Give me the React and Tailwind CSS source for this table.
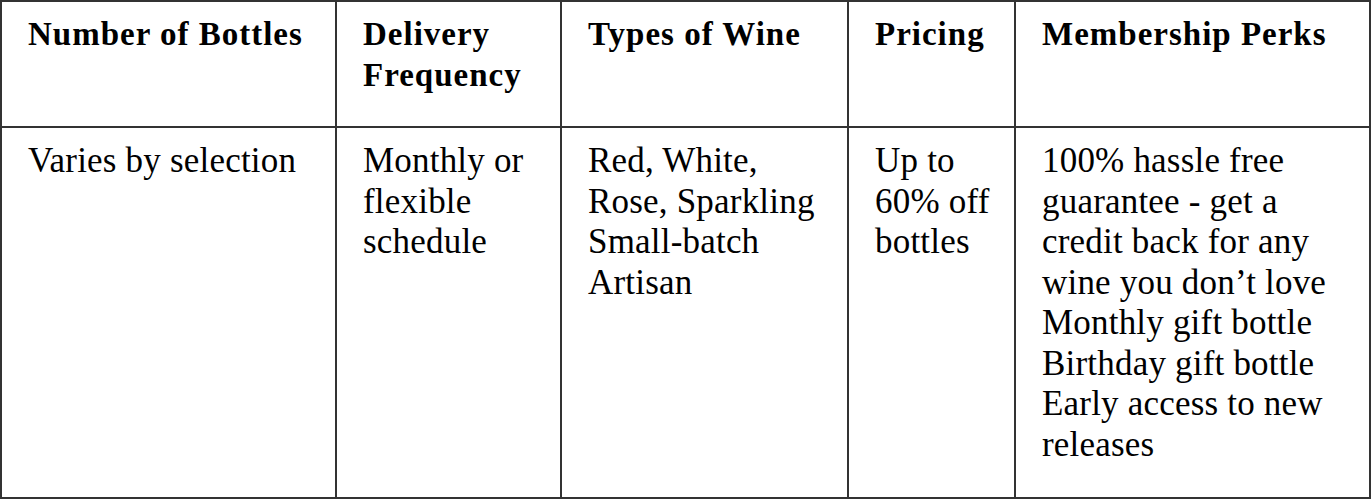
import React from "react";

const headers = [
  ["Number of Bottles"],
  ["Delivery", "Frequency"],
  ["Types of Wine"],
  ["Pricing"],
  ["Membership Perks"],
];

const rows = [
  ["Varies by selection"],
  ["Monthly or", "flexible", "schedule"],
  ["Red, White,", "Rose, Sparkling", "Small-batch", "Artisan"],
  ["Up to", "60% off", "bottles"],
  [
    "100% hassle free",
    "guarantee - get a",
    "credit back for any",
    "wine you don\u2019t love",
    "Monthly gift bottle",
    "Birthday gift bottle",
    "Early access to new",
    "releases",
  ],
];

function App() {
  return (
    <div className="w-[1371px] h-[500px] bg-white">
      <div
        className="grid grid-cols-[333px_223px_285px_165px_353px] grid-rows-[124px_369px] gap-[2px] p-[2px] bg-[#333] w-[1371px] text-black"
        style={{ fontFamily: '"Liberation Serif", "Times New Roman", serif' }}
      >
        {headers.map((lines, i) => (
          <div key={"h" + i} className="bg-white pl-[26px] pt-[12px]">
            {lines.map((l) => (
              <div
                key={l}
                className="whitespace-nowrap text-[33px] leading-[40.5px] font-bold tracking-[1px]"
              >
                {l}
              </div>
            ))}
          </div>
        ))}
        {rows.map((lines, i) => (
          <div key={"r" + i} className="bg-white pl-[26px] pt-[13px]">
            {lines.map((l) => (
              <div
                key={l}
                className="whitespace-nowrap text-[35px] leading-[40.5px] tracking-[0.2px]"
              >
                {l}
              </div>
            ))}
          </div>
        ))}
      </div>
    </div>
  );
}

export default App;
